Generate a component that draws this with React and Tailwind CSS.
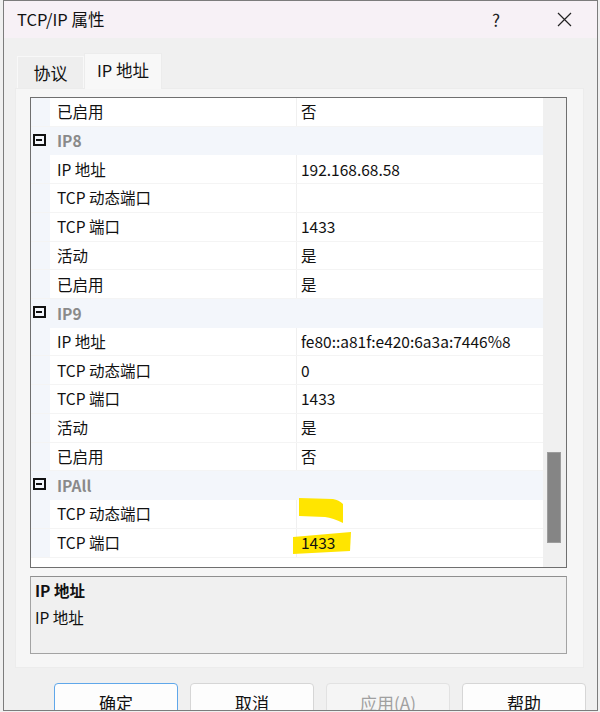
import React from "react";

const font = { fontFamily: '"Noto Sans CJK SC", "Noto Sans", sans-serif' };

const rows = [
  { label: "已启用", value: "否" },
  { cat: "IP8" },
  { label: "IP 地址", value: "192.168.68.58" },
  { label: "TCP 动态端口", value: "" },
  { label: "TCP 端口", value: "1433" },
  { label: "活动", value: "是" },
  { label: "已启用", value: "是" },
  { cat: "IP9" },
  { label: "IP 地址", value: "fe80::a81f:e420:6a3a:7446%8" },
  { label: "TCP 动态端口", value: "0" },
  { label: "TCP 端口", value: "1433" },
  { label: "活动", value: "是" },
  { label: "已启用", value: "否" },
  { cat: "IPAll" },
  { label: "TCP 动态端口", value: "", mark: 1 },
  { label: "TCP 端口", value: "1433", mark: 2 },
];

function Mark({ kind }) {
  if (kind === 1) {
    return (
      <svg className="absolute left-0 top-0 overflow-visible" width="60" height="29">
        <path d="M2,-2 L36,-1 Q42,0 46,4 L46,23 Q36,18 28,17 L2,16 Z" fill="#ffe500" />
      </svg>
    );
  }
  return (
    <svg className="absolute left-0 top-0 overflow-visible" width="60" height="29">
      <path d="M-4,8 L54,3 L53,22 L-4,25 Z" fill="#ffe500" />
    </svg>
  );
}

function Row({ row }) {
  if (row.cat) {
    return (
      <div className="flex h-[28.73px] bg-[#f3f6fb]">
        <div className="w-[19px] flex items-start pt-[7px] pl-[2px]">
          <div className="w-[13px] h-[12px] border-2 border-[#111] flex items-center pl-[1px]">
            <div className="w-[6px] h-[2px] bg-[#111]" />
          </div>
        </div>
        <div className="flex items-center pl-[7px] font-bold text-[#8a8a8a]">{row.cat}</div>
      </div>
    );
  }
  return (
    <div className="flex h-[28.73px] bg-white border-b border-[#f4f4f4]">
      <div className="w-[19px] bg-[#f3f6fb]" />
      <div className="w-[246px] flex items-center pl-[7px]">{row.label}</div>
      <div className="w-px bg-[#f0f0f0]" />
      <div className="w-[246px] relative flex items-center pl-[4px]">
        {row.mark && <Mark kind={row.mark} />}
        <span className="relative">{row.value}</span>
      </div>
    </div>
  );
}

function App() {
  return (
    <div className="w-[600px] h-[712px] bg-[#f0f0f0] pl-[3px] overflow-hidden text-[#111]" style={font}>
      <div className="w-[595px] h-[711px] border border-[#7c7c7c] bg-[#f0f0f0] overflow-hidden">
        {/* title bar */}
        <div className="h-[37px] bg-[#f7f1f6] flex items-center">
          <div className="pl-[13px] text-[16.5px] flex-1">TCP/IP 属性</div>
          <div className="w-[40px] flex justify-center text-[17px] text-[#222]">?</div>
          <div className="w-[28px]" />
          <div className="w-[40px] flex justify-center mr-[13px]">
            <svg width="15" height="15" viewBox="0 0 15 15">
              <path d="M1 1 L14 14 M14 1 L1 14" stroke="#222" strokeWidth="1.2" />
            </svg>
          </div>
        </div>

        <div className="px-[11px]">
          {/* tabs */}
          <div className="mt-[14px] h-[36px] flex items-end pl-[2px]">
            <div className="w-[67px] h-[32px] border border-b-0 border-[#f8f8f8] bg-[#eeeeee] flex items-center justify-center text-[17px]">
              协议
            </div>
            <div className="w-[78px] h-[36px] -mb-px relative bg-[#f8f8f8] border border-b-0 border-[#ececec] flex items-center justify-center text-[16.5px] pb-[3px]">
              IP 地址
            </div>
          </div>

          {/* tab panel */}
          <div className="w-[569px] bg-[#f6f6f6] border border-[#ececec] pt-[8px] pb-[13px] pl-[14px] flex flex-col gap-[8px]">
            {/* property grid */}
            <div className="w-[537px] h-[471px] border border-[#6f6f6f] bg-white flex overflow-hidden text-[15.5px]">
              <div className="w-[512px] flex flex-col">
                {rows.map((r, i) => (
                  <Row key={i} row={r} />
                ))}
              </div>
              <div className="w-[23px] bg-[#f0f0f0] pt-[354px] pl-[4px]">
                <div className="w-[14px] h-[91px] bg-[#858585] border border-[#9c9c9c]" />
              </div>
            </div>

            {/* description */}
            <div className="w-[537px] h-[78px] border border-[#a3a3a3] border-t-[#8f8f8f] bg-[#f0f0f0] pl-[4px] text-[15.5px] leading-[27px]">
              <div className="font-bold">IP 地址</div>
              <div>IP 地址</div>
            </div>
          </div>
        </div>

        {/* buttons */}
        <div className="mt-[15px] ml-[50px] flex gap-[12px] text-[17px]">
          <button className="w-[124px] h-[40px] rounded-[4px] bg-[#fdfdfd] border border-[#5fa7ea] flex items-center justify-center">
            确定
          </button>
          <button className="w-[124px] h-[40px] rounded-[4px] bg-[#fdfdfd] border border-[#d6d6d6] flex items-center justify-center">
            取消
          </button>
          <button className="w-[124px] h-[40px] rounded-[4px] bg-[#f5f5f5] border border-[#e2e2e2] text-[#a0a0a0] flex items-center justify-center">
            应用(A)
          </button>
          <button className="w-[124px] h-[40px] rounded-[4px] bg-[#fdfdfd] border border-[#d6d6d6] flex items-center justify-center">
            帮助
          </button>
        </div>
      </div>
    </div>
  );
}

export default App;
